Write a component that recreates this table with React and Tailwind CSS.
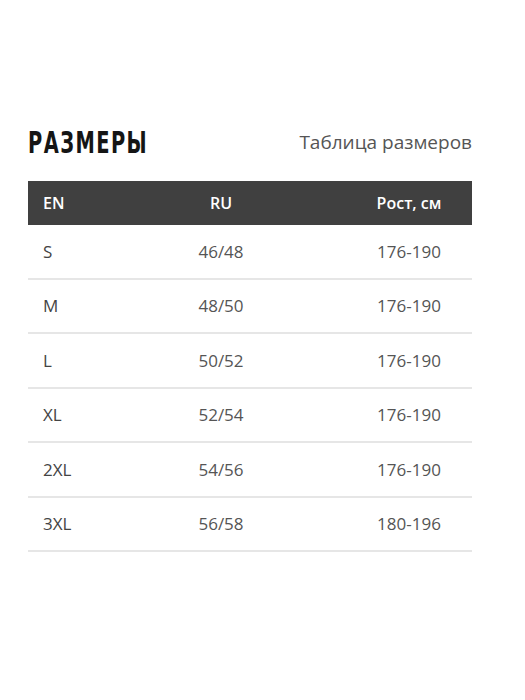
const rows = [
    ["S", "46/48", "176-190"],
    ["M", "48/50", "176-190"],
    ["L", "50/52", "176-190"],
    ["XL", "52/54", "176-190"],
    ["2XL", "54/56", "176-190"],
    ["3XL", "56/58", "180-196"],
];

export default function App() {
    return (
        <div className="w-[525px] h-[700px] bg-white pt-[122px] pl-[28px] [font-family:'Open_Sans',sans-serif]">
            <div className="w-[444px]">
                {/* Titre */}
                <div className="flex items-center justify-between h-[40px] mb-[19px]">
                    <h2 className="origin-left scale-x-[0.72] text-[30px] font-bold tracking-[2px] text-[#151515] [font-family:'DejaVu_Sans_Condensed','DejaVu_Sans',sans-serif] whitespace-nowrap">
                        РАЗМЕРЫ
                    </h2>
                    <span className="text-[19px] text-[#555]">Таблица размеров</span>
                </div>

                {/* Tableau */}
                <div className="grid grid-cols-[68px_250px_1fr] h-[44px] items-center bg-[#404040] text-white text-[16px] font-semibold">
                    <span className="pl-[15px]">EN</span>
                    <span className="text-center">RU</span>
                    <span className="text-center">Рост, см</span>
                </div>
                {rows.map(([en, ru, height]) => (
                    <div
                        key={en}
                        className="grid grid-cols-[68px_250px_1fr] h-[54.5px] items-center border-b-2 border-[#e6e6e6] text-[17px] text-[#555]"
                    >
                        <span className="pl-[15px] text-[#444]">{en}</span>
                        <span className="text-center">{ru}</span>
                        <span className="text-center">{height}</span>
                    </div>
                ))}
            </div>
        </div>
    );
}
